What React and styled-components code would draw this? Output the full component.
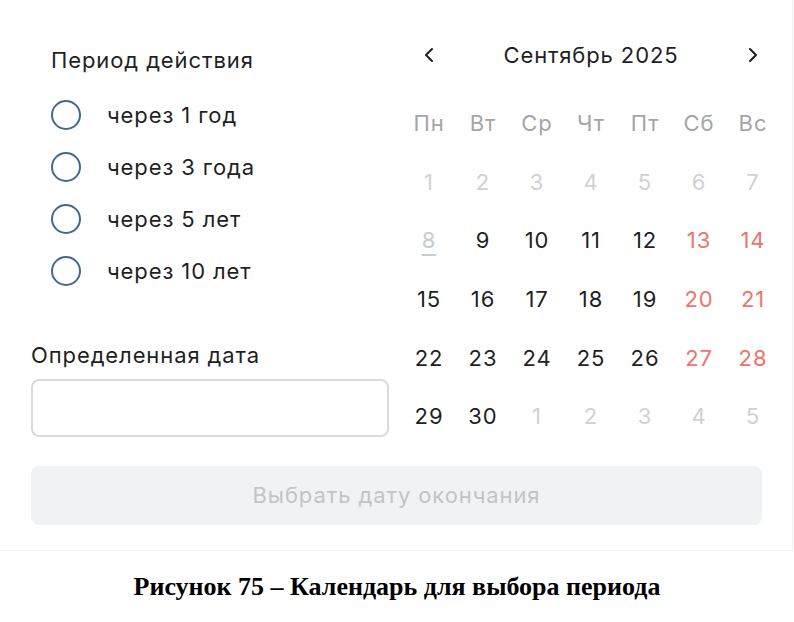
import styled, { createGlobalStyle } from "styled-components";

const GlobalStyle = createGlobalStyle`
  body {
    margin: 0;
    background: #fff;
    font-family: Inter, "Noto Sans", sans-serif;
  }
`;

const Panel = styled.div`
  width: 793px;
  height: 551px;
  box-sizing: border-box;
  padding: 0 0 0 31px;
  border-right: 1px solid #f1f1f1;
  border-bottom: 1px solid #f4f4f4;
  display: flex;
  flex-direction: column;
  font-size: 22px;
  letter-spacing: 0.9px;
  color: #1f1f1f;
`;

const Top = styled.div`
  display: flex;
  gap: 13px;
`;

const LeftCol = styled.div`
  width: 358px;
  display: flex;
  flex-direction: column;
`;

const PeriodBlock = styled.div`
  padding: 47px 0 0 20px;
`;

const Title = styled.div`
  line-height: 26px;
`;

const Option = styled.label`
  display: flex;
  align-items: center;
  height: 52px;
  gap: 26px;
  &:first-of-type {
    margin-top: 16px;
  }
`;

const Radio = styled.span`
  width: 30px;
  height: 30px;
  box-sizing: border-box;
  border-radius: 50%;
  border: 2px solid #41698f;
`;

const DateLabel = styled(Title)`
  margin-top: 45px;
`;

const Input = styled.div`
  margin-top: 11px;
  height: 58px;
  box-sizing: border-box;
  border: 2px solid #d9dadc;
  border-radius: 8px;
`;

const Calendar = styled.div`
  width: 378px;
  padding-top: 35px;
`;

const Header = styled.div`
  height: 40px;
  display: grid;
  grid-template-columns: 54px 1fr 54px;
  align-items: center;
  justify-items: center;
`;

const Grid = styled.div`
  margin-top: 19px;
  display: grid;
  grid-template-columns: repeat(7, 54px);
  grid-auto-rows: 58.6px;
  align-items: center;
  justify-items: center;
`;

const colors = {
  head: "#a3a5a8",
  muted: "#cfd1d4",
  normal: "#1f1f1f",
  weekend: "#f0736b",
};

const Cell = styled.span`
  color: ${(p) => colors[p.$kind]};
  ${(p) =>
    p.$today &&
    `
    color: #c6cbd2;
    text-decoration: underline;
    text-decoration-thickness: 2px;
    text-underline-offset: 6px;
  `}
`;

const Button = styled.div`
  margin-top: 20px;
  width: 731px;
  height: 59px;
  border-radius: 8px;
  background: #f1f2f4;
  display: flex;
  align-items: center;
  justify-content: center;
  color: #c2c4c7;
`;

const Caption = styled.div`
  font-family: "Liberation Serif", "Times New Roman", serif;
  font-weight: bold;
  font-size: 26px;
  text-align: center;
  width: 794px;
  margin-top: 21px;
  color: #000;
`;

const Chevron = ({ dir }) => (
  <svg width="14" height="18" viewBox="0 0 14 18">
    <polyline
      points={dir === "left" ? "10,3 4,9 10,15" : "4,3 10,9 4,15"}
      fill="none"
      stroke="#1f1f1f"
      strokeWidth="2"
      strokeLinecap="round"
      strokeLinejoin="round"
    />
  </svg>
);

const weekDays = ["Пн", "Вт", "Ср", "Чт", "Пт", "Сб", "Вс"];

function buildDays() {
  const days = [];
  for (let d = 1; d <= 7; d++) days.push({ n: d, kind: "muted" });
  for (let d = 8; d <= 30; d++) {
    const col = (d - 1) % 7;
    days.push({
      n: d,
      kind: col >= 5 ? "weekend" : "normal",
      today: d === 8,
    });
  }
  for (let d = 1; d <= 5; d++) days.push({ n: d, kind: "muted" });
  return days;
}

const options = ["через 1 год", "через 3 года", "через 5 лет", "через 10 лет"];

export default function App() {
  const days = buildDays();
  return (
    <>
      <GlobalStyle />
      <Panel>
        <Top>
          <LeftCol>
            <PeriodBlock>
              <Title>Период действия</Title>
              {options.map((o) => (
                <Option key={o}>
                  <Radio />
                  {o}
                </Option>
              ))}
            </PeriodBlock>
            <DateLabel>Определенная дата</DateLabel>
            <Input />
          </LeftCol>
          <Calendar>
            <Header>
              <Chevron dir="left" />
              <span>Сентябрь 2025</span>
              <Chevron dir="right" />
            </Header>
            <Grid>
              {weekDays.map((w) => (
                <Cell key={w} $kind="head">
                  {w}
                </Cell>
              ))}
              {days.map((d, i) => (
                <Cell key={i} $kind={d.kind} $today={d.today}>
                  {d.n}
                </Cell>
              ))}
            </Grid>
          </Calendar>
        </Top>
        <Button>Выбрать дату окончания</Button>
      </Panel>
      <Caption>Рисунок 75 – Календарь для выбора периода</Caption>
    </>
  );
}
